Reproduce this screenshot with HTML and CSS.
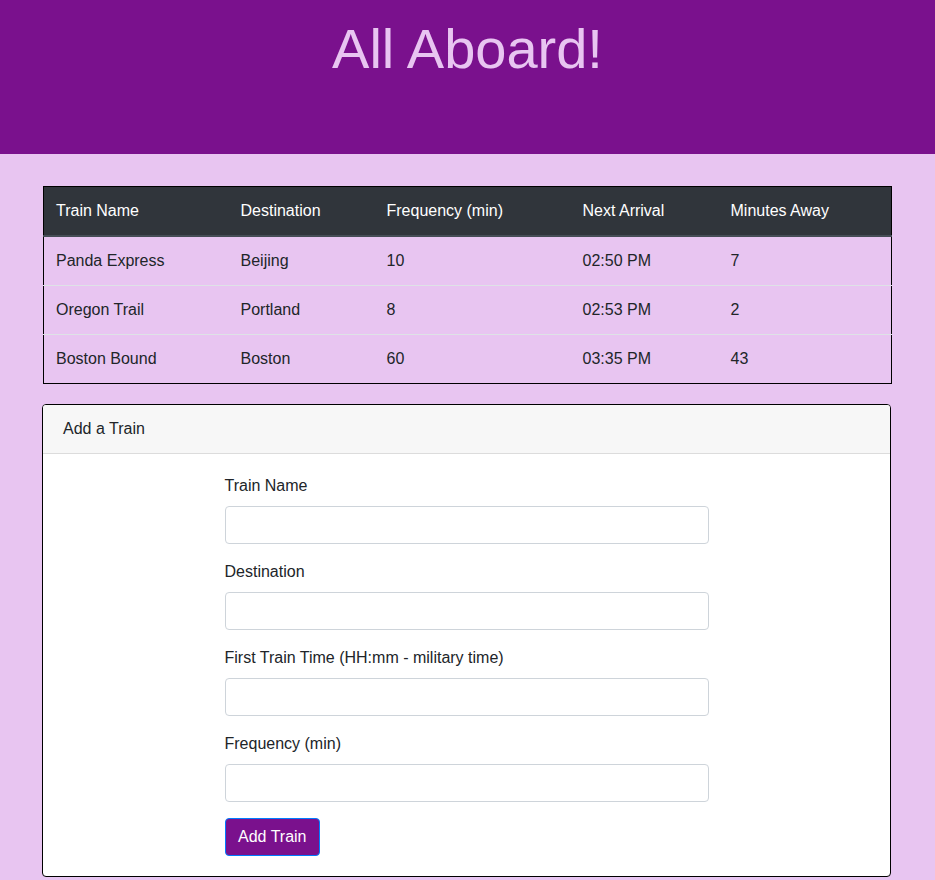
FILE: index.html
```html
<!DOCTYPE html>
<html>
<head>
<meta charset="utf-8">
<title>All Aboard!</title>
<link rel="stylesheet" href="styles.css">
</head>
<body>
<header class="hero">
  <h1 class="hero-title">All Aboard!</h1>
</header>
<main class="container">
  <table class="schedule">
    <thead>
      <tr>
        <th class="c1">Train Name</th>
        <th class="c2">Destination</th>
        <th class="c3">Frequency (min)</th>
        <th class="c4">Next Arrival</th>
        <th class="c5">Minutes Away</th>
      </tr>
    </thead>
    <tbody>
      <tr><td>Panda Express</td><td>Beijing</td><td>10</td><td>02:50 PM</td><td>7</td></tr>
      <tr><td>Oregon Trail</td><td>Portland</td><td>8</td><td>02:53 PM</td><td>2</td></tr>
      <tr><td>Boston Bound</td><td>Boston</td><td>60</td><td>03:35 PM</td><td>43</td></tr>
    </tbody>
  </table>
  <section class="card">
    <div class="card-header">Add a Train</div>
    <div class="card-body">
      <form class="train-form">
        <div class="form-group">
          <label class="form-label">Train Name</label>
          <input class="form-input" type="text">
        </div>
        <div class="form-group">
          <label class="form-label">Destination</label>
          <input class="form-input" type="text">
        </div>
        <div class="form-group">
          <label class="form-label">First Train Time (HH:mm - military time)</label>
          <input class="form-input" type="text">
        </div>
        <div class="form-group">
          <label class="form-label">Frequency (min)</label>
          <input class="form-input" type="text">
        </div>
        <button class="btn" type="button">Add Train</button>
      </form>
    </div>
  </section>
</main>
</body>
</html>
```
FILE: styles.css
```css
* { box-sizing: border-box; }
html, body { margin: 0; padding: 0; }
body {
  background: #e8c5f1;
  font-family: "Liberation Sans", Arial, sans-serif;
  font-size: 16px;
  line-height: 1.5;
  color: #212529;
}
.hero {
  background: #7a118d;
  height: 154px;
  padding-top: 15px;
  text-align: center;
}
.hero-title {
  margin: 0;
  font-size: 56px;
  font-weight: 300;
  line-height: 1.2;
  color: #e8c5f1;
}
.container {
  margin: 32px 43px 0 42px;
}
.schedule {
  width: 849px;
  margin-left: 1px;
  border-collapse: collapse;
  border: 1px solid #000;
  margin-bottom: 20px;
}
.schedule th, .schedule td {
  text-align: left;
  padding: 12px;
  vertical-align: top;
  font-weight: 400;
}
.schedule th {
  background: #30353b;
  color: #fff;
  border-bottom: 2px solid #454d55;
}
.schedule td {
  border-top: 1px solid #dee2e6;
}
.schedule tbody tr:first-child td { border-top: none; }
.c1 { width: 185px; }
.c2 { width: 146px; }
.c3 { width: 196px; }
.c4 { width: 148px; }
.card {
  width: 849px;
  border: 1px solid #000;
  border-radius: 4px;
  background: #fff;
  overflow: hidden;
}
.card-header {
  background: #f7f7f7;
  padding: 12px 20px;
  border-bottom: 1px solid #dcdcdc;
}
.card-body {
  padding: 20px;
}
.train-form {
  width: 484px;
  margin: 0 auto;
}
.form-group {
  margin-bottom: 16px;
}
.form-label {
  display: block;
  margin-bottom: 8px;
}
.form-input {
  display: block;
  width: 100%;
  height: 38px;
  padding: 6px 12px;
  border: 1px solid #ced4da;
  border-radius: 4px;
  background: #fff;
  font: inherit;
}
.btn {
  display: block;
  height: 38px;
  padding: 6px 12.5px;
  font: inherit;
  color: #fff;
  background: #7a118d;
  border: 1px solid #007bff;
  border-radius: 4px;
}
```
